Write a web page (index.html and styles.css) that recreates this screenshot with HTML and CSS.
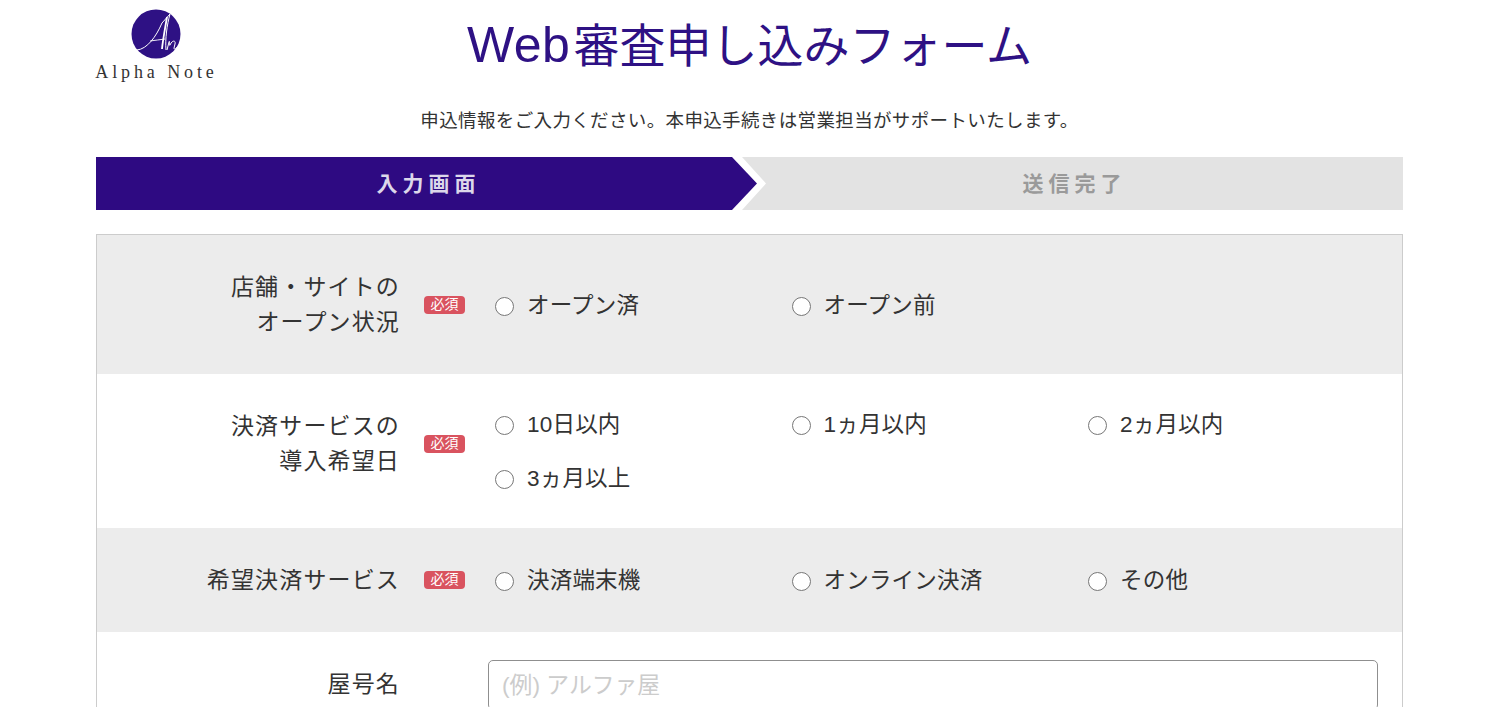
FILE: index.html
```html
<!DOCTYPE html>
<html lang="ja">

<head>
    <meta charset="UTF-8">
    <meta name="viewport" content="width=device-width, initial-scale=1.0">
    <title>Web審査申し込みフォーム</title>
    <link rel="stylesheet" href="styles.css">
</head>

<body>

    <div class="main">
        <div class="header">
            <div class="logo">
                <svg class="logo-mark" width="50" height="50" viewBox="0 0 50 50">
                    <circle cx="25" cy="25" r="24.5" fill="#2e1184"/>
                    <path d="M6 41 C16 40 25 28 31 14 L39 5 C36 16 34 30 35 41" fill="none" stroke="#fff" stroke-width="1"/>
                    <path d="M36 8 C34 20 32 30 31 40" fill="none" stroke="#fff" stroke-width="1.8"/>
                    <path d="M19 32 C24 31 29 31 34 30" fill="none" stroke="#fff" stroke-width="0.9"/>
                    <path d="M36 41 L38 33 C39 30 38 38 39 36 C41 31 45 31 44 35 L43 39 C43 41 45 40 46 38" fill="none" stroke="#fff" stroke-width="1"/>
                </svg>
                <span class="logo-name">Alpha Note</span>
            </div>
            <h1><span class="latin">Web</span>審査申し込みフォーム</h1>
        </div>

        <p class="lead">申込情報をご入力ください。本申込手続きは営業担当がサポートいたします。</p>

        <div class="steps">
            <div class="step step-active">入力画面</div>
            <div class="step step-next">送信完了</div>
        </div>

        <form class="form">
            <div class="row gray">
                <div class="head">
                    <label class="title">店舗・サイトの<br>オープン状況</label>
                    <span class="badge">必須</span>
                </div>
                <div class="options">
                    <label class="option"><input type="radio" name="open">オープン済</label>
                    <label class="option"><input type="radio" name="open">オープン前</label>
                </div>
            </div>

            <div class="row">
                <div class="head">
                    <label class="title">決済サービスの<br>導入希望日</label>
                    <span class="badge">必須</span>
                </div>
                <div class="options">
                    <label class="option"><input type="radio" name="date">10日以内</label>
                    <label class="option"><input type="radio" name="date">1ヵ月以内</label>
                    <label class="option"><input type="radio" name="date">2ヵ月以内</label>
                    <label class="option"><input type="radio" name="date">3ヵ月以上</label>
                </div>
            </div>

            <div class="row gray">
                <div class="head">
                    <label class="title">希望決済サービス</label>
                    <span class="badge">必須</span>
                </div>
                <div class="options">
                    <label class="option"><input type="radio" name="service">決済端末機</label>
                    <label class="option"><input type="radio" name="service">オンライン決済</label>
                    <label class="option"><input type="radio" name="service">その他</label>
                </div>
            </div>

            <div class="row">
                <div class="head">
                    <label class="title">屋号名</label>
                </div>
                <div class="field">
                    <input type="text" class="text-input" placeholder="(例) アルファ屋">
                </div>
            </div>
        </form>
    </div>

</body>

</html>
```

FILE: styles.css
```css
body {
    margin: 0;
    height: 707px;
    overflow: hidden;
    background-color: #fff;
    color: #333;
    font-family: 'Liberation Sans', 'Noto Sans CJK JP', sans-serif;
}

.main {
    width: 1307px;
    margin-left: 96px;
}

.header {
    position: relative;
    height: 90px;
    display: flex;
    justify-content: center;
}

h1 {
    margin: 16px 0 0;
    font-size: 46px;
    line-height: 58px;
    font-weight: 400;
    color: #2e1184;
}

.latin {
    margin-right: 3px;
    font-size: 50px;
    letter-spacing: 0.5px;
}

.logo {
    position: absolute;
    left: 0;
    top: 9px;
    width: 121px;
    display: flex;
    flex-direction: column;
    align-items: center;
}

.logo-mark {
    display: block;
    margin-left: -2px;
}

.logo-name {
    margin-top: 3px;
    font-family: 'Liberation Serif', serif;
    font-size: 18px;
    line-height: 20px;
    letter-spacing: 3.9px;
    white-space: nowrap;
    color: #333;
}

.lead {
    margin: 18px 0 0;
    height: 24px;
    font-size: 18.5px;
    line-height: 25px;
    letter-spacing: 0.36px;
    text-align: center;
}

.steps {
    display: flex;
    margin-top: 25px;
    height: 53px;
}

.step {
    display: flex;
    align-items: center;
    justify-content: center;
    padding: 0 0 4px 4px;
    box-sizing: border-box;
    font-size: 21px;
    font-weight: 700;
    letter-spacing: 5px;
}

.step-active {
    width: 661px;
    flex-shrink: 0;
    background-color: #2e0a82;
    color: #dcd7ea;
    clip-path: polygon(0 0, 636px 0, 100% 50%, 636px 100%, 0 100%);
}

.step-next {
    flex: 1;
    margin-left: -15px;
    background-color: #e3e3e3;
    color: #9a9a9a;
    clip-path: polygon(0 0, 100% 0, 100% 100%, 0 100%, 24px 50%);
}

.form {
    margin-top: 24px;
    border: 1px solid #ccc;
}

.row {
    display: flex;
    padding: 28px 0;
}

.gray {
    background-color: #ececec;
}

.head {
    width: 391px;
    flex-shrink: 0;
    display: flex;
    align-items: center;
    align-self: flex-start;
    padding: 6.5px 0;
}

.title {
    width: 303px;
    flex-shrink: 0;
    text-align: right;
    font-size: 23px;
    line-height: 35px;
    letter-spacing: 1.15px;
}

.badge {
    width: 41px;
    height: 18px;
    margin-left: 24px;
    border-radius: 4px;
    background-color: #d9535f;
    color: #fff;
    font-size: 14px;
    line-height: 17px;
    text-align: center;
}

.options {
    flex: 1;
    align-self: center;
    display: grid;
    grid-template-columns: repeat(3, 296.5px);
    row-gap: 10px;
    padding-left: 7px;
}

.option {
    display: flex;
    align-items: center;
    height: 44px;
    padding-bottom: 4px;
    box-sizing: border-box;
    font-size: 22.5px;
    letter-spacing: 0.2px;
}

.option input {
    appearance: none;
    flex-shrink: 0;
    width: 19px;
    height: 19px;
    margin: 7px 13px 0 0;
    border: 1.5px solid #777;
    border-radius: 50%;
    background-color: #fff;
}

.field {
    flex: 1;
    padding-right: 24px;
}

.text-input {
    display: block;
    box-sizing: border-box;
    width: 100%;
    height: 50px;
    padding: 0 13px;
    border: 1.5px solid #8f8f8f;
    border-radius: 5px;
    outline: none;
    font-family: inherit;
    font-size: 22.8px;
}

.text-input::placeholder {
    color: #ccc;
}
```
